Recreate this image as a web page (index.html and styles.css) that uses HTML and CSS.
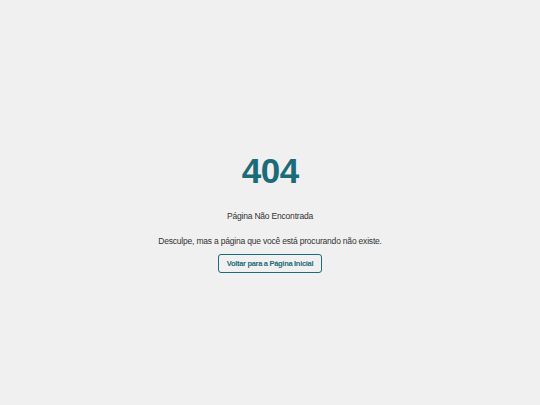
FILE: index.html
```html
<!DOCTYPE html>
<html lang="pt">
<head>
<meta charset="utf-8">
<title>404</title>
<link rel="stylesheet" href="styles.css">
</head>
<body>
<main class="page">
  <div class="box">
    <h1 class="code">404</h1>
    <p class="title">Página Não Encontrada</p>
    <p class="desc">Desculpe, mas a página que você está procurando não existe.</p>
    <a class="btn" href="#">Voltar para a Página Inicial</a>
  </div>
</main>
</body>
</html>
```
FILE: styles.css
```css
html, body {
  margin: 0;
  padding: 0;
  height: 100%;
}
body {
  background: #f0f0f0;
  font-family: "Liberation Sans", Arial, sans-serif;
  color: #333;
}
.page {
  box-sizing: border-box;
  height: 100%;
  padding-top: 19px;
  display: flex;
  align-items: center;
  justify-content: center;
}
.box {
  display: flex;
  flex-direction: column;
  align-items: center;
  text-align: center;
}
.code {
  margin: 0;
  font-size: 35px;
  line-height: 40px;
  letter-spacing: -0.5px;
  text-indent: 0.5px;
  font-weight: bold;
  color: #1b6b78;
}
.title {
  margin: 19px 0 0;
  font-size: 8.5px;
  line-height: 12px;
  letter-spacing: -0.2px;
}
.desc {
  margin: 13px 0 0;
  font-size: 8.5px;
  line-height: 12px;
  letter-spacing: -0.2px;
}
.btn {
  margin-top: 7px;
  display: inline-block;
  padding: 3px 8px;
  font-size: 7.5px;
  line-height: 11px;
  letter-spacing: -0.3px;
  font-weight: bold;
  color: #1b6b78;
  text-decoration: none;
  border: 1px solid #1b6b78;
  border-radius: 3px;
}
```
